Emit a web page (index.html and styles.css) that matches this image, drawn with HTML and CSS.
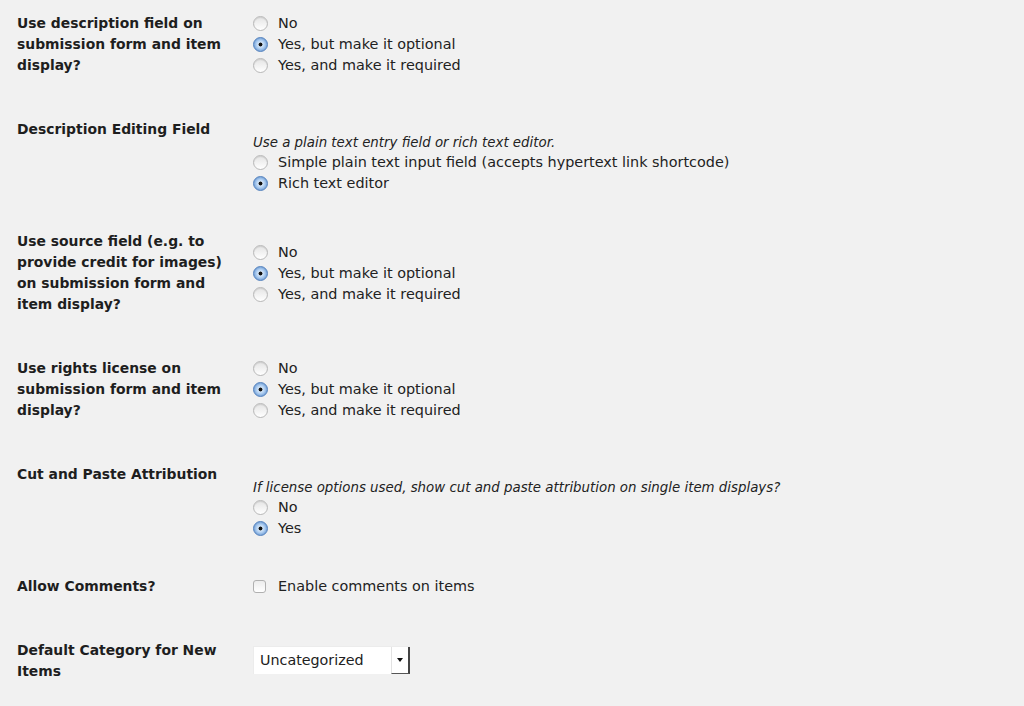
FILE: index.html
```html
<!DOCTYPE html>
<html>
<head>
<meta charset="utf-8">
<link rel="stylesheet" href="styles.css">
</head>
<body>
<div class="wrap">
<table class="form-table">
  <tr>
    <th>Use description field on submission form and item display?</th>
    <td>
      <label class="opt"><span class="radio"></span>No</label>
      <label class="opt"><span class="radio checked"></span>Yes, but make it optional</label>
      <label class="opt"><span class="radio"></span>Yes, and make it required</label>
    </td>
  </tr>
  <tr>
    <th>Description Editing Field</th>
    <td>
      <div class="spacer"></div>
      <div class="desc">Use a plain text entry field or rich text editor.</div>
      <label class="opt"><span class="radio"></span>Simple plain text input field (accepts hypertext link shortcode)</label>
      <label class="opt"><span class="radio checked"></span>Rich text editor</label>
    </td>
  </tr>
  <tr>
    <th>Use source field (e.g. to provide credit for images) on submission form and item display?</th>
    <td>
      <label class="opt"><span class="radio"></span>No</label>
      <label class="opt"><span class="radio checked"></span>Yes, but make it optional</label>
      <label class="opt"><span class="radio"></span>Yes, and make it required</label>
    </td>
  </tr>
  <tr>
    <th>Use rights license on submission form and item display?</th>
    <td>
      <label class="opt"><span class="radio"></span>No</label>
      <label class="opt"><span class="radio checked"></span>Yes, but make it optional</label>
      <label class="opt"><span class="radio"></span>Yes, and make it required</label>
    </td>
  </tr>
  <tr>
    <th>Cut and Paste Attribution</th>
    <td>
      <div class="spacer"></div>
      <div class="desc">If license options used, show cut and paste attribution on single item displays?</div>
      <label class="opt"><span class="radio"></span>No</label>
      <label class="opt"><span class="radio checked"></span>Yes</label>
    </td>
  </tr>
  <tr>
    <th>Allow Comments?</th>
    <td>
      <label class="opt"><span class="checkbox"></span>Enable comments on items</label>
    </td>
  </tr>
  <tr>
    <th>Default Category for New Items</th>
    <td>
      <span class="select"><span class="select-value">Uncategorized</span><span class="select-arrow"></span></span>
    </td>
  </tr>
</table>
</div>
</body>
</html>
```

FILE: styles.css
```css
html, body {
  margin: 0;
  padding: 0;
  background: #f1f1f1;
  height: 100%;
  overflow: hidden;
}
body {
  font-family: "DejaVu Sans", Verdana, sans-serif;
  font-size: 14.4px;
  color: #222;
}
.wrap {
  padding-left: 17px;
}
.form-table {
  border-collapse: collapse;
  border-spacing: 0;
  margin-top: -8px;
}
.form-table th {
  width: 212px;
  padding: 21.3px 24px 21.3px 0;
  text-align: left;
  vertical-align: top;
  font-weight: bold;
  font-size: 13.9px;
  line-height: 21px;
  color: #1e1e1e;
}
.form-table td {
  padding: 16.3px 10px 16.3px 0;
  vertical-align: middle;
  line-height: 21px;
}
.spacer {
  height: 20px;
}
.desc {
  font-style: italic;
  font-size: 13.35px;
  line-height: 18px;
}
.opt {
  display: flex;
  align-items: center;
  height: 21px;
  white-space: nowrap;
}
.radio {
  flex: none;
  width: 13px;
  height: 13px;
  border-radius: 50%;
  border: 1px solid #b8b8b8;
  background: linear-gradient(#e4e4e4, #ffffff);
  box-shadow: inset 0 1px 1px rgba(0,0,0,0.10);
  margin-right: 10px;
}
.radio.checked {
  border-color: #5a86bf;
  background: radial-gradient(circle at 50% 50%, #111 0, #111 1.6px, #d3e5f8 2.3px, #a8c9ee 4.5px, #6d9ad3 7px);
  box-shadow: none;
}
.checkbox {
  flex: none;
  width: 11px;
  height: 11px;
  border: 1px solid #b0b0b0;
  border-radius: 3px;
  background: linear-gradient(#ececec, #ffffff);
  margin-right: 12px;
}
.select {
  display: inline-flex;
  align-items: stretch;
  height: 28px;
  width: 157px;
  background: #fff;
  border-top: 1px solid #ececec;
  border-left: 1px solid #ececec;
  box-sizing: border-box;
  vertical-align: middle;
  margin-top: -1px;
}
.select-value {
  flex: 1;
  padding-left: 6px;
  line-height: 27px;
  font-size: 14.3px;
}
.select-arrow {
  width: 16px;
  border-left: 1px solid #e2e2e2;
  border-right: 2px solid #444;
  border-bottom: 1px solid #555;
  display: flex;
  align-items: center;
  justify-content: center;
}
.select-arrow::after {
  content: "";
  border-left: 3.5px solid transparent;
  border-right: 3.5px solid transparent;
  border-top: 4px solid #111;
}
```
